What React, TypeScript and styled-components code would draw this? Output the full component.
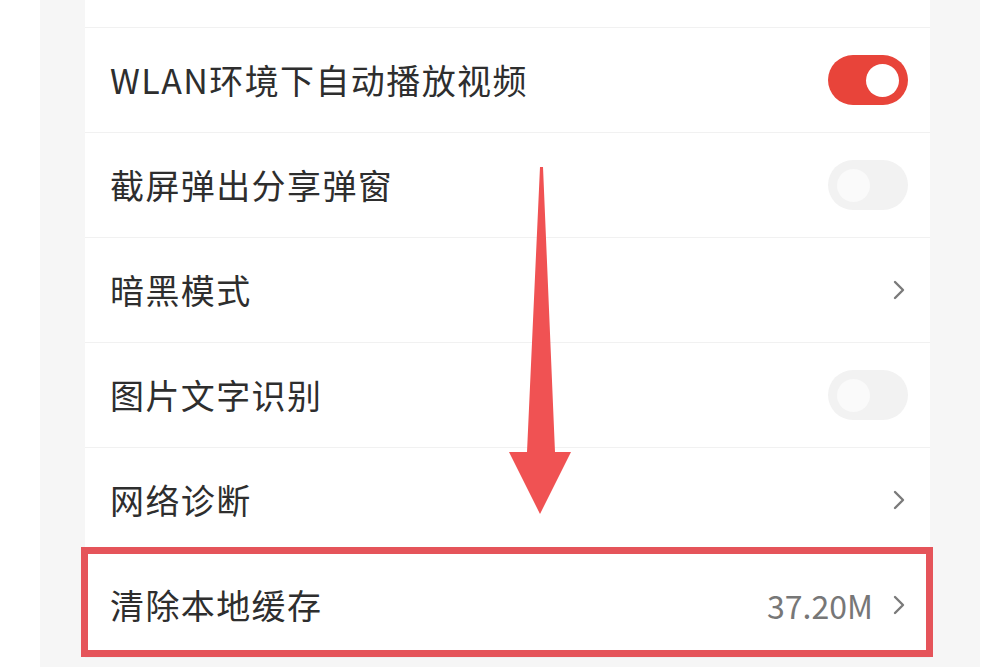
import React from "react";
import styled, { createGlobalStyle } from "styled-components";

const Global = createGlobalStyle`
  html, body { margin: 0; padding: 0; background: #ffffff; }
  body { font-family: "Noto Sans CJK SC", "Noto Sans", sans-serif; }
  * { box-sizing: border-box; }
`;

const Page = styled.div`
  position: relative;
  width: 1000px;
  height: 667px;
  overflow: hidden;
  background: #ffffff;
  padding-left: 40px;
  display: flex;
`;

const Frame = styled.div`
  width: 940px;
  height: 100%;
  background: #f6f6f6;
  padding: 0 50px 0 45px;
`;

const Card = styled.div`
  background: #ffffff;
  margin-top: -77px;
  display: flex;
  flex-direction: column;
`;

const Row = styled.div`
  height: 105px;
  flex: none;
  display: flex;
  align-items: center;
  justify-content: space-between;
  padding: 0 22px 0 25px;
  border-bottom: 1px solid #f1f1f1;
`;

const Label = styled.span<{ $faint?: boolean }>`
  font-family: "Noto Sans CJK SC", "Noto Sans", sans-serif;
  font-size: 34px;
  letter-spacing: 1.4px;
  color: ${(p) => (p.$faint ? "#f4f4f4" : "#2e2e2e")};
  line-height: 1;
`;

const Right = styled.div`
  display: flex;
  align-items: center;
  gap: 20px;
`;

const Value = styled.span`
  font-family: "Noto Sans CJK SC", "Noto Sans", sans-serif;
  font-size: 32px;
  color: #777777;
  line-height: 1;
`;

const Toggle = styled.div<{ $on?: boolean }>`
  width: 80px;
  height: 50px;
  border-radius: 25px;
  background: ${(p) => (p.$on ? "#e8443a" : "#f2f2f2")};
  display: flex;
  align-items: center;
  justify-content: ${(p) => (p.$on ? "flex-end" : "flex-start")};
  padding: 0 9px;
`;

const Knob = styled.div<{ $on?: boolean }>`
  width: 33px;
  height: 33px;
  border-radius: 50%;
  background: ${(p) => (p.$on ? "#ffffff" : "#fafafa")};
`;

const Chevron = styled.svg`
  width: 12px;
  height: 22px;
  margin-right: 3px;
  display: block;
`;

const Highlight = styled.div`
  position: absolute;
  left: 81px;
  top: 547px;
  width: 852px;
  height: 110px;
  border: 7px solid #e5545a;
`;

const Arrow = styled.svg`
  position: absolute;
  left: 0;
  top: 0;
  width: 1000px;
  height: 667px;
  pointer-events: none;
`;

const ChevronIcon = () => (
  <Chevron viewBox="0 0 12 22">
    <polyline
      points="2,3 10,11 2,19"
      fill="none"
      stroke="#7a7a7a"
      strokeWidth="2.4"
      strokeLinecap="round"
      strokeLinejoin="round"
    />
  </Chevron>
);

type Item = {
  label: string;
  kind: "on" | "off" | "link";
  value?: string;
  faint?: boolean;
};

const items: Item[] = [
  { label: "", kind: "off", faint: true },
  { label: "WLAN环境下自动播放视频", kind: "on" },
  { label: "截屏弹出分享弹窗", kind: "off" },
  { label: "暗黑模式", kind: "link" },
  { label: "图片文字识别", kind: "off" },
  { label: "网络诊断", kind: "link" },
  { label: "清除本地缓存", kind: "link", value: "37.20M" },
];

export default function App() {
  return (
    <>
      <Global />
      <Page>
        <Frame>
          <Card>
            {items.map((it, i) => (
              <Row key={i}>
                <Label $faint={it.faint}>{it.label}</Label>
                <Right>
                  {it.value && <Value>{it.value}</Value>}
                  {it.kind === "link" ? (
                    <ChevronIcon />
                  ) : (
                    <Toggle $on={it.kind === "on"}>
                      <Knob $on={it.kind === "on"} />
                    </Toggle>
                  )}
                </Right>
              </Row>
            ))}
          </Card>
        </Frame>
        <Highlight />
        <Arrow viewBox="0 0 1000 667">
          <polygon
            points="540,167 543,167 555,452 571,452 540,514 509,452 527,452"
            fill="#f05253"
          />
        </Arrow>
      </Page>
    </>
  );
}
